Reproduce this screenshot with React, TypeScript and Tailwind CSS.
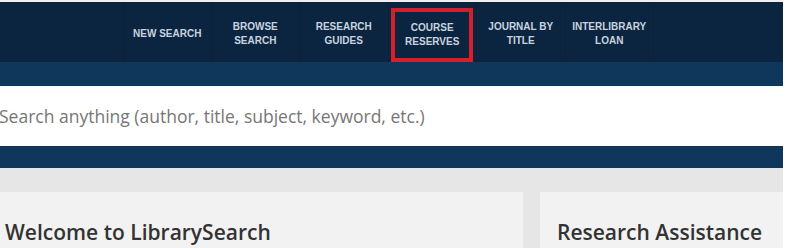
const navItems = [
  { label: ["NEW SEARCH"], active: false },
  { label: ["BROWSE", "SEARCH"], active: false },
  { label: ["RESEARCH", "GUIDES"], active: false },
  { label: ["COURSE", "RESERVES"], active: true },
  { label: ["JOURNAL BY", "TITLE"], active: false },
  { label: ["INTERLIBRARY", "LOAN"], active: false },
];

export default function App() {
  return (
    <div className="h-[248px] w-[788px] overflow-hidden bg-white font-['Open_Sans',sans-serif]">
      <div className="w-[783px]">
        <div className="h-[2px] bg-[#eef0f2]" />
        <nav className="flex h-[60px] bg-[#0b2541] pl-[123px]">
          {navItems.map((item) => (
            <div
              key={item.label.join(" ")}
              className="flex w-[88.5px] items-center justify-center border-r border-[#0a2138] pt-[3px] first:border-l"
            >
              <div
                className={
                  item.active
                    ? "flex h-[54px] w-[82px] mt-[3px] items-center justify-center border-[4px] border-[#d4202c]"
                    : "flex items-center justify-center"
                }
              >
                <span className="text-center font-['Liberation_Sans',sans-serif] text-[10px] font-bold leading-[14px] text-[#c8d3df]">
                  {item.label.map((line) => (
                    <span key={line} className="block">
                      {line}
                    </span>
                  ))}
                </span>
              </div>
            </div>
          ))}
        </nav>
        <div className="bg-[#0f365b] pt-[24px] pb-[22px]">
          <div className="flex h-[60px] items-center bg-white">
            <span className="-ml-[1px] text-[17.5px] text-[#767676]">
              Search anything (author, title, subject, keyword, etc.)
            </span>
          </div>
        </div>
        <div className="bg-[#e6e6e6] pt-[24px]">
          <div className="flex gap-[17px]">
            <section className="h-[60px] w-[523px] bg-[#f2f2f2] pt-[24px] pl-[5px]">
              <h2 className="text-[21px] font-semibold leading-[32px] text-[#333]">
                Welcome to LibrarySearch
              </h2>
            </section>
            <section className="h-[60px] flex-1 bg-[#f2f2f2] pt-[24px] pl-[17px]">
              <h2 className="text-[21px] font-semibold leading-[32px] text-[#333]">
                Research Assistance
              </h2>
            </section>
          </div>
        </div>
      </div>
    </div>
  );
}
